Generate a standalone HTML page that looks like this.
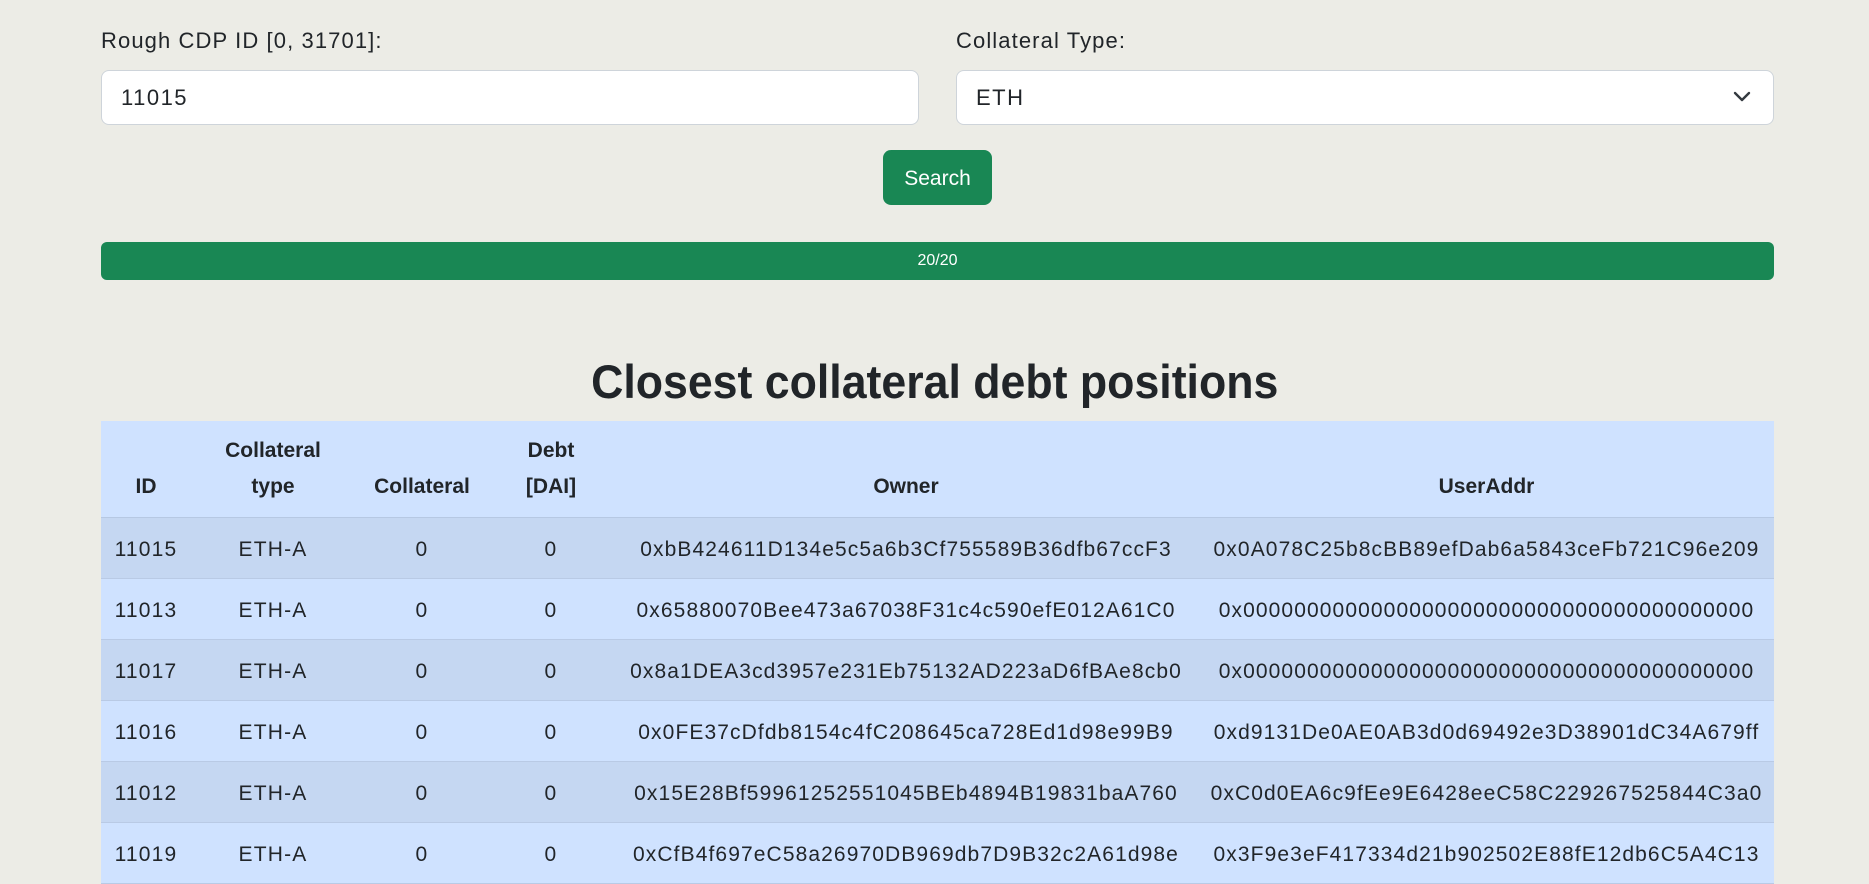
<!DOCTYPE html>
<html><head><meta charset="utf-8"><style>
*{box-sizing:border-box;margin:0;padding:0}
body{width:1869px;height:862px;overflow:hidden;background:#ecece6;font-family:"Liberation Sans",sans-serif;color:#212529;position:relative}
.lbl{position:absolute;top:28px;font-size:22px;letter-spacing:1.1px}
.inp{position:absolute;top:70px;height:55px;background:#fff;border:1px solid #ced4da;border-radius:8px;font-size:22px;line-height:53px;padding-left:19px;letter-spacing:1.5px}
.btn{position:absolute;left:883px;top:150px;width:109px;height:55px;background:#198754;color:#fff;border-radius:8px;font-size:21px;line-height:57px;text-align:center}
.prog{position:absolute;left:101px;top:242px;width:1673px;height:38px;background:#198754;border-radius:6px;color:#fff;font-size:16px;line-height:38px;text-align:center}
h2{position:absolute;left:0;width:1869px;top:352px;text-align:center;font-size:47px;font-weight:bold;line-height:60px}
h2 span{display:inline-block;transform:scaleX(0.95)}
table{position:absolute;left:101px;top:421px;width:1673px;border-collapse:collapse;table-layout:fixed;font-size:21px}
th,td{text-align:center;padding:12px 0;line-height:36px;white-space:nowrap;overflow:hidden}
th{vertical-align:bottom;background:#cfe2ff;font-weight:bold;border-bottom:1px solid #b6c8e3}
td{border-bottom:1px solid #b9cae5;height:61px;letter-spacing:1.2px;padding-top:14px;padding-bottom:10px}
tr.o td{background:#c5d7f2}
tr.e td{background:#cfe2ff}
td.h{letter-spacing:1.1px}
</style></head><body>
<div class="lbl" style="left:101px">Rough CDP ID [0, 31701]:</div>
<div class="lbl" style="left:956px">Collateral Type:</div>
<div class="inp" style="left:101px;width:818px">11015</div>
<div class="inp" style="left:956px;width:818px">ETH
<svg style="position:absolute;right:22px;top:20px" width="18" height="12" viewBox="0 0 18 12"><path d="M2 2l7 7 7-7" fill="none" stroke="#343a40" stroke-width="2.4" stroke-linecap="round" stroke-linejoin="round"/></svg></div>
<div class="btn">Search</div>
<div class="prog">20/20</div>
<h2><span>Closest collateral debt positions</span></h2>
<table>
<colgroup><col style="width:90px"><col style="width:164px"><col style="width:134px"><col style="width:124px"><col style="width:586px"><col style="width:575px"></colgroup>
<tr><th>ID</th><th>Collateral<br>type</th><th>Collateral</th><th>Debt<br>[DAI]</th><th>Owner</th><th>UserAddr</th></tr>
<tr class="o"><td>11015</td><td>ETH-A</td><td>0</td><td>0</td><td class="h">0xbB424611D134e5c5a6b3Cf755589B36dfb67ccF3</td><td class="h">0x0A078C25b8cBB89efDab6a5843ceFb721C96e209</td></tr>
<tr class="e"><td>11013</td><td>ETH-A</td><td>0</td><td>0</td><td class="h">0x65880070Bee473a67038F31c4c590efE012A61C0</td><td class="h">0x0000000000000000000000000000000000000000</td></tr>
<tr class="o"><td>11017</td><td>ETH-A</td><td>0</td><td>0</td><td class="h">0x8a1DEA3cd3957e231Eb75132AD223aD6fBAe8cb0</td><td class="h">0x0000000000000000000000000000000000000000</td></tr>
<tr class="e"><td>11016</td><td>ETH-A</td><td>0</td><td>0</td><td class="h">0x0FE37cDfdb8154c4fC208645ca728Ed1d98e99B9</td><td class="h">0xd9131De0AE0AB3d0d69492e3D38901dC34A679ff</td></tr>
<tr class="o"><td>11012</td><td>ETH-A</td><td>0</td><td>0</td><td class="h">0x15E28Bf59961252551045BEb4894B19831baA760</td><td class="h">0xC0d0EA6c9fEe9E6428eeC58C229267525844C3a0</td></tr>
<tr class="e"><td>11019</td><td>ETH-A</td><td>0</td><td>0</td><td class="h">0xCfB4f697eC58a26970DB969db7D9B32c2A61d98e</td><td class="h">0x3F9e3eF417334d21b902502E88fE12db6C5A4C13</td></tr>
</table>
</body></html>
